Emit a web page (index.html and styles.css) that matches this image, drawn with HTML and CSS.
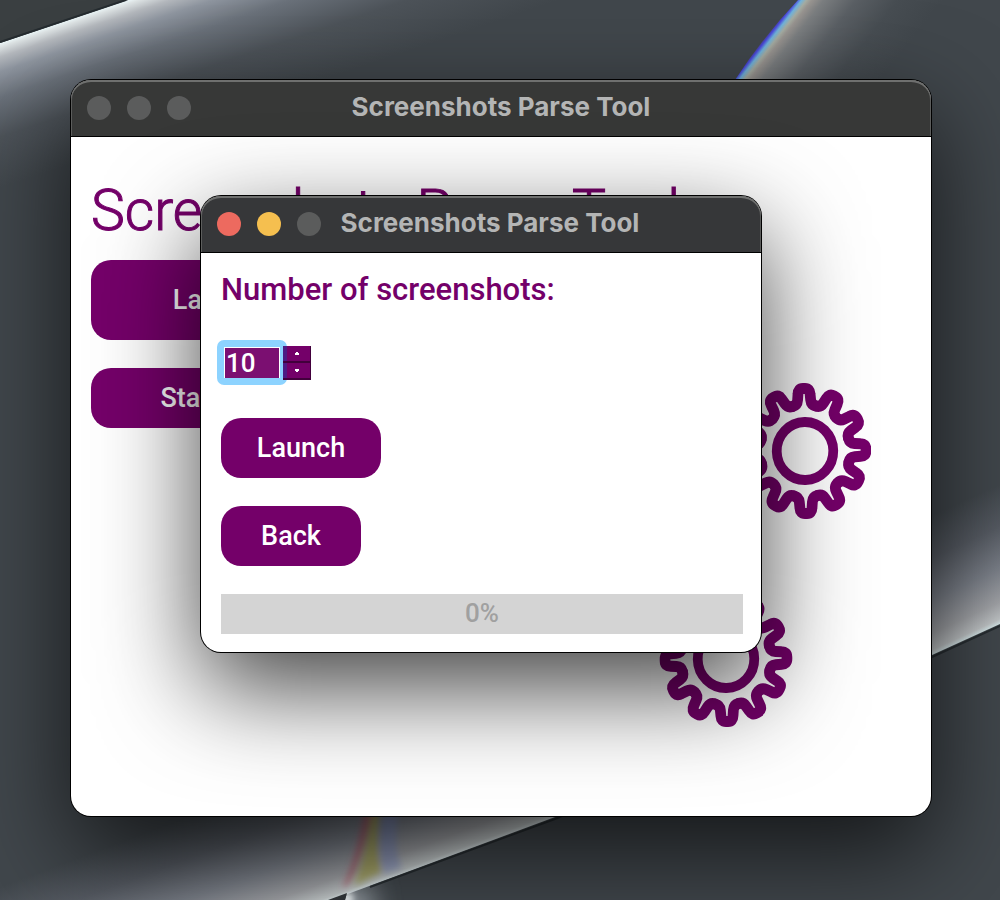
FILE: index.html
```html
<!DOCTYPE html>
<html lang="en">
<head>
<meta charset="utf-8">
<title>Screenshots Parse Tool</title>
<link rel="stylesheet" href="styles.css">
</head>
<body>
<div class="desktop">
  <svg class="wallpaper" viewBox="0 0 1000 900" preserveAspectRatio="xMidYMid slice" aria-hidden="true">
    <defs>
      <filter id="soft" filterUnits="userSpaceOnUse" x="-100" y="-100" width="1200" height="1100"><feGaussianBlur stdDeviation="3"/></filter>
      <filter id="glow" filterUnits="userSpaceOnUse" x="-100" y="-100" width="1200" height="1100"><feGaussianBlur stdDeviation="14"/></filter>
      <clipPath id="mid"><path d="M0 43L128 0H1000V624L932 655Q740 740 555 817L345 895L330 900H0Z"/></clipPath>
      <clipPath id="low"><path d="M1000 624L932 655Q740 740 555 817L347 893L345 900H1000Z"/></clipPath>
      <linearGradient id="topGlow" gradientUnits="userSpaceOnUse" x1="64" y1="21" x2="108" y2="152">
        <stop offset="0" stop-color="#eefafc"/>
        <stop offset=".03" stop-color="#dde3e4"/>
        <stop offset=".1" stop-color="#b4b8bd"/>
        <stop offset=".2" stop-color="#8e959f"/>
        <stop offset=".38" stop-color="#6a717a"/>
        <stop offset=".65" stop-color="#4d5359"/>
        <stop offset="1" stop-color="#41474c"/>
      </linearGradient>
      <linearGradient id="edgeGlow" gradientUnits="userSpaceOnUse" x1="766" y1="36" x2="858" y2="108">
        <stop offset="0" stop-color="#484080"/>
        <stop offset=".02" stop-color="#4a48dc"/>
        <stop offset=".05" stop-color="#6fb3dc"/>
        <stop offset=".085" stop-color="#a5aca2"/>
        <stop offset=".12" stop-color="#989490"/>
        <stop offset=".2" stop-color="#7b7e80"/>
        <stop offset=".42" stop-color="#5a5f64"/>
        <stop offset=".7" stop-color="#474d52"/>
        <stop offset="1" stop-color="#41474c"/>
      </linearGradient>
      <linearGradient id="lowGlow" gradientUnits="userSpaceOnUse" x1="451" y1="857" x2="406" y2="736">
        <stop offset="0" stop-color="#e6f2f4"/>
        <stop offset=".04" stop-color="#c6cccd"/>
        <stop offset=".16" stop-color="#a2a4a8"/>
        <stop offset=".4" stop-color="#7b8089"/>
        <stop offset=".7" stop-color="#565b63"/>
        <stop offset="1" stop-color="#41474c"/>
      </linearGradient>
      <linearGradient id="rightGlow" gradientUnits="userSpaceOnUse" x1="966" y1="640" x2="913" y2="524">
        <stop offset="0" stop-color="#d8eaec"/>
        <stop offset=".04" stop-color="#c0c4c6"/>
        <stop offset=".16" stop-color="#a2a4a8"/>
        <stop offset=".4" stop-color="#7b8089"/>
        <stop offset=".7" stop-color="#565b63"/>
        <stop offset="1" stop-color="#41474c"/>
      </linearGradient>
    </defs>
    <rect width="1000" height="900" fill="#41474c"/>
    <path d="M0 43L128 0H0Z" fill="#3a3f41"/>
    <g clip-path="url(#mid)">
      <path d="M0 43L128 0H600V300H0Z" fill="url(#topGlow)"/>
      <path d="M798 0Q762 38 735 80L700 140H1000V0Z" fill="url(#edgeGlow)"/>
      <path d="M0 700H700V900H0Z" fill="url(#lowGlow)"/>
      <path d="M880 400H1000V700H880Z" fill="url(#rightGlow)"/>
      <g filter="url(#soft)">
        <path d="M366 800H375Q366 850 349 884L342 888Q358 855 366 800Z" fill="#b04858" opacity=".6"/>
        <path d="M374 800H382Q374 850 382 872L354 886Q368 850 374 800Z" fill="#a3a044" opacity=".65"/>
        <path d="M384 800H400Q392 850 402 868L384 874Q376 850 384 800Z" fill="#7688c8" opacity=".45"/>
      </g>
    </g>
    <g clip-path="url(#low)">
      <path d="M348 885V925" stroke="#c8d0d8" stroke-width="50" opacity=".7" filter="url(#glow)"/>
      <path d="M347 893V905" stroke="#f0f6f8" stroke-width="12" filter="url(#soft)"/>
      <path d="M1000 626L932 657Q740 742 555 819L370 887" fill="none" stroke="#20272b" stroke-width="2" opacity=".8"/>
    </g>
    <path d="M0 42L126 0" stroke="#20272b" stroke-width="2" opacity=".8"/>
    <path d="M328 900L347 893L345 900Z" fill="#33373b"/>
  </svg>

  <section class="window main-window" aria-label="Main window">
    <header class="titlebar">
      <div class="lights"><i class="light"></i><i class="light"></i><i class="light"></i></div>
      <span class="title">Screenshots Parse Tool</span>
    </header>
    <div class="main-body">
      <h1 class="heading">Screenshots Parse Tool</h1>
      <button class="btn btn-tall" type="button">Launch</button>
      <button class="btn btn-start" type="button">Start</button>
      <svg class="gears" viewBox="0 0 216 348" aria-hidden="true">
        <defs>
          <path id="tooth" d="M-11.9 -44.8C-8.5 -45.6 -7 -47.5 -6.7 -51L-6.2 -57Q-6 -62.5 -1 -62.5H1Q6 -62.5 6.2 -57L6.7 -51C7 -47.5 8.5 -45.6 11.9 -44.8"/>
          <g id="gear" class="gear">
            <circle class="gear-hub" r="29"/>
            <use href="#tooth"/><use href="#tooth" transform="rotate(30)"/><use href="#tooth" transform="rotate(60)"/><use href="#tooth" transform="rotate(90)"/><use href="#tooth" transform="rotate(120)"/><use href="#tooth" transform="rotate(150)"/><use href="#tooth" transform="rotate(180)"/><use href="#tooth" transform="rotate(210)"/><use href="#tooth" transform="rotate(240)"/><use href="#tooth" transform="rotate(270)"/><use href="#tooth" transform="rotate(300)"/><use href="#tooth" transform="rotate(330)"/>
          </g>
        </defs>
        <use href="#gear" transform="translate(150 71) scale(.975 1) rotate(-1)"/>
        <use href="#gear" transform="translate(71 279) scale(.975 1) rotate(-1)"/>
      </svg>
    </div>
  </section>

  <section class="window dialog" role="dialog" aria-label="Screenshots Parse Tool">
    <header class="titlebar">
      <div class="lights"><i class="light light-close"></i><i class="light light-min"></i><i class="light"></i></div>
      <span class="title">Screenshots Parse Tool</span>
    </header>
    <div class="dialog-body">
      <label class="label" for="count">Number of screenshots:</label>
      <div class="spin">
        <input class="spin-input" id="count" type="number" value="10">
        <div class="spin-buttons">
          <button class="step" type="button" aria-label="Increase"><svg class="arrow" viewBox="0 0 4 3"><path d="M1 0H3V1H4V3H0V1H1Z"/></svg></button>
          <button class="step" type="button" aria-label="Decrease"><svg class="arrow" viewBox="0 0 4 3"><path d="M0 0H4V2H3V3H1V2H0Z"/></svg></button>
        </div>
      </div>
      <button class="btn btn-launch" type="button">Launch</button>
      <button class="btn btn-back" type="button">Back</button>
      <div class="progress" role="progressbar" aria-label="Progress" aria-valuemin="0" aria-valuemax="100" aria-valuenow="0">0%</div>
    </div>
  </section>
</div>
</body>
</html>
```
FILE: styles.css
```css
* { box-sizing: border-box; }
body {
  margin: 0;
  font-family: Roboto, "Liberation Sans", sans-serif;
  color: #740069;
}
.desktop {
  position: relative;
  min-height: 100vh;
  overflow: hidden;
  background: #40464b;
}
.wallpaper {
  position: absolute;
  inset: 0;
  width: 100%;
  height: 100%;
}
.window {
  position: absolute;
  display: flex;
  flex-direction: column;
  background: #fff;
  border-radius: 20px;
}
.main-window {
  top: 80px;
  left: 71px;
  width: 86%;
  min-height: 736px;
  box-shadow: 0 0 0 1px #000, 0 36px 100px rgba(0, 0, 0, .7);
}
.dialog {
  top: 196px;
  left: 201px;
  width: 56%;
  box-shadow: 0 0 0 1px #000, 0 36px 100px rgba(0, 0, 0, .75);
}
.titlebar {
  position: relative;
  display: flex;
  align-items: center;
  justify-content: center;
  height: 57px;
  border-bottom: 1px solid #000;
  border-radius: 20px 20px 0 0;
  background: #373837;
  box-shadow: inset 0 2px 0 #6f706f, inset 1px 0 0 #5c5d5c, inset -1px 0 0 #5c5d5c;
}
.dialog .titlebar {
  padding-left: 18px;
  background: #363739;
}
.lights {
  position: absolute;
  left: 16px;
  display: flex;
  gap: 16px;
}
.light {
  width: 24px;
  height: 24px;
  border-radius: 50%;
  background: #5b5c5c;
}
.light-close { background: #ed6a5f; }
.light-min { background: #f5bf4f; }
.title {
  padding-bottom: 2px;
  font: 700 26px/32px Inter, sans-serif;
  color: #b4b5b5;
  white-space: nowrap;
}
.main-body {
  position: relative;
  flex: 1;
  display: flex;
  flex-direction: column;
  align-items: flex-start;
  gap: 28px;
  padding: 42px 20px;
}
.heading {
  margin: 0 0 -11px;
  font-size: 57px;
  font-weight: 300;
  line-height: 64px;
  white-space: nowrap;
  -webkit-text-stroke: 1px #740069;
}
.btn {
  height: 60px;
  padding: 0;
  border: 0;
  border-radius: 20px;
  background: #740069;
  color: #fff;
  font: 500 27px/32px Roboto, sans-serif;
}
.btn-tall { width: 252px; height: 80px; }
.btn-start { width: 198px; }
.btn-launch { width: 160px; }
.btn-back { width: 140px; }
.gears {
  position: absolute;
  right: 60px;
  bottom: 88px;
  width: 216px;
  height: 348px;
}
.gear {
  fill: none;
  stroke: #740069;
  stroke-width: 11;
  stroke-linecap: round;
}
.gear-hub { stroke-width: 10; }
.dialog-body {
  display: flex;
  flex-direction: column;
  align-items: flex-start;
  gap: 28px;
  padding: 18px;
  padding-left: 20px;
}
.label {
  margin-bottom: 8px;
  font-size: 31px;
  font-weight: 500;
  line-height: 38px;
}
.spin {
  position: relative;
  display: flex;
  height: 34px;
  margin: 1px 0 10px;
}
.spin-input {
  width: 56px;
  height: 32px;
  margin: 1px 3px;
  padding: 0 0 0 1px;
  border: 1px solid #fff;
  border-radius: 0;
  outline: 0;
  box-shadow: 0 0 0 3px #8dd3ff;
  background: #7b0f71;
  color: #fff;
  font: 500 26px/30px Roboto, sans-serif;
  appearance: textfield;
}
.spin-input::-webkit-inner-spin-button { display: none; }
/* Focus ring around the field, overlapping the step buttons */
.spin::after {
  content: "";
  position: absolute;
  inset: -6px 24px -5px -4px;
  border: 7px solid #8dd3ff;
  border-radius: 7px;
  pointer-events: none;
}
.spin-buttons {
  z-index: 1;
  display: flex;
  flex-direction: column;
  width: 28px;
  background: #740069;
}
.step {
  flex: 1;
  display: grid;
  place-items: center;
  padding: 0;
  border: 1px solid #42003c;
  border-width: 0 1px 2px 0;
  background: linear-gradient(90deg, #4c1c84 4px, #740069 4px);
}
.arrow { width: 4px; height: 3px; fill: #fff; }
.progress {
  align-self: stretch;
  background: #d4d4d4;
  color: #a0a0a0;
  text-align: center;
  font-size: 26px;
  font-weight: 500;
  line-height: 38px;
  padding-bottom: 2px;
}
```
